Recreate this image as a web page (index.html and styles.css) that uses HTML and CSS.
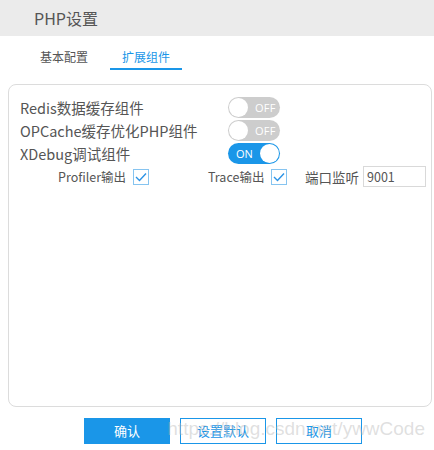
FILE: index.html
```html
<!DOCTYPE html>
<html lang="zh-CN">
<head>
<meta charset="utf-8">
<title>PHP设置</title>
<link rel="stylesheet" href="styles.css">
</head>
<body>
<div class="page">
  <div class="header">PHP设置</div>
  <div class="tabs">
    <div class="tab">基本配置</div>
    <div class="tab active">扩展组件</div>
  </div>
  <div class="panel">
    <div class="row">
      <span class="label">Redis数据缓存组件</span>
      <span class="toggle off"><span class="knob"></span><span class="ttext">OFF</span></span>
    </div>
    <div class="row">
      <span class="label">OPCache缓存优化PHP组件</span>
      <span class="toggle off"><span class="knob"></span><span class="ttext">OFF</span></span>
    </div>
    <div class="row">
      <span class="label">XDebug调试组件</span>
      <span class="toggle on"><span class="ttext">ON</span><span class="knob"></span></span>
    </div>
    <div class="subrow">
      <div class="group g1">
        <span class="sublabel">Profiler输出</span>
        <span class="check"><svg width="12" height="10" viewBox="0 0 12 10"><path d="M1 5 L4.5 8.5 L11 1.5" fill="none" stroke="#2b93e6" stroke-width="1.4"/></svg></span>
      </div>
      <div class="group g2">
        <span class="sublabel">Trace输出</span>
        <span class="check"><svg width="12" height="10" viewBox="0 0 12 10"><path d="M1 5 L4.5 8.5 L11 1.5" fill="none" stroke="#2b93e6" stroke-width="1.4"/></svg></span>
      </div>
      <div class="group g3">
        <span class="portlabel">端口监听</span>
        <span class="input">9001</span>
      </div>
    </div>
  </div>
  <div class="buttons">
    <span class="btn primary">确认</span>
    <span class="btn">设置默认</span>
    <span class="btn">取消</span>
  </div>
  <div class="watermark">https://blog.csdn.net/ywwCode</div>
</div>
</body>
</html>
```
FILE: styles.css
```css
html, body {
  margin: 0;
  padding: 0;
  background: #fff;
}
.page {
  position: relative;
  width: 434px;
  height: 450px;
  font-family: "Noto Sans CJK SC", "Noto Sans", sans-serif;
  color: #555;
}
.header {
  height: 36px;
  line-height: 36px;
  background: #ebebeb;
  padding-left: 34px;
  font-size: 16px;
  color: #555;
}
.tabs {
  display: flex;
  gap: 10px;
  padding: 10px 0 0 28px;
}
.tab {
  padding: 0 12px;
  height: 22px;
  line-height: 22px;
  font-size: 12px;
  color: #555;
  border-bottom: 2px solid transparent;
}
.tab.active {
  color: #1a96e8;
  border-bottom-color: #1a96e8;
}
.panel {
  margin: 14px 2px 0 8px;
  border: 1px solid #dcdcdc;
  border-radius: 8px;
  padding: 11px 0 0 11px;
  box-sizing: border-box;
  height: 323px;
}
.row {
  display: flex;
  align-items: center;
  height: 23px;
}
.label {
  width: 208px;
  font-size: 14.5px;
  color: #555;
  white-space: nowrap;
}
.toggle {
  width: 52px;
  height: 21px;
  border-radius: 11px;
  display: flex;
  align-items: center;
  box-sizing: border-box;
  padding: 0 1px;
  font-family: "Open Sans", "Noto Sans", sans-serif;
  font-size: 11px;
}
.toggle.off {
  background: #cdcdcd;
  color: #fff;
}
.toggle.on {
  background: #1a96e8;
  color: #fff;
  justify-content: space-between;
  padding-left: 8px;
}
.knob {
  width: 19px;
  height: 19px;
  border-radius: 50%;
  background: #fff;
}
.toggle.off .ttext {
  margin-left: 7px;
  letter-spacing: 0.3px;
}
.subrow {
  display: flex;
  align-items: center;
  height: 23px;
  padding-left: 38px;
}
.group {
  display: flex;
  align-items: center;
}
.g1 { width: 150px; }
.g2 { width: 97px; }
.sublabel {
  font-size: 12.5px;
  color: #555;
  margin-right: 7px;
}
.check {
  width: 16px;
  height: 16px;
  border: 1px solid #86c4f0;
  box-sizing: border-box;
  display: flex;
  align-items: center;
  justify-content: center;
}
.portlabel {
  font-size: 13.5px;
  color: #555;
  margin-right: 4px;
}
.input {
  width: 63px;
  height: 21px;
  line-height: 19px;
  border: 1px solid #d9d9d9;
  box-sizing: border-box;
  padding-left: 3px;
  font-size: 12.5px;
  color: #555;
}
.buttons {
  display: flex;
  gap: 10px;
  padding: 11px 0 0 84px;
}
.btn {
  width: 86px;
  height: 26px;
  line-height: 24px;
  box-sizing: border-box;
  border: 1px solid #1a96e8;
  text-align: center;
  font-size: 13px;
  color: #1a96e8;
  background: #fff;
}
.btn.primary {
  background: #1a96e8;
  color: #fff;
}
.watermark {
  position: absolute;
  right: 9px;
  top: 418px;
  font-family: "Liberation Sans", Arial, sans-serif;
  font-size: 19px;
  color: rgba(185, 185, 185, 0.45);
  white-space: nowrap;
  pointer-events: none;
}
```
